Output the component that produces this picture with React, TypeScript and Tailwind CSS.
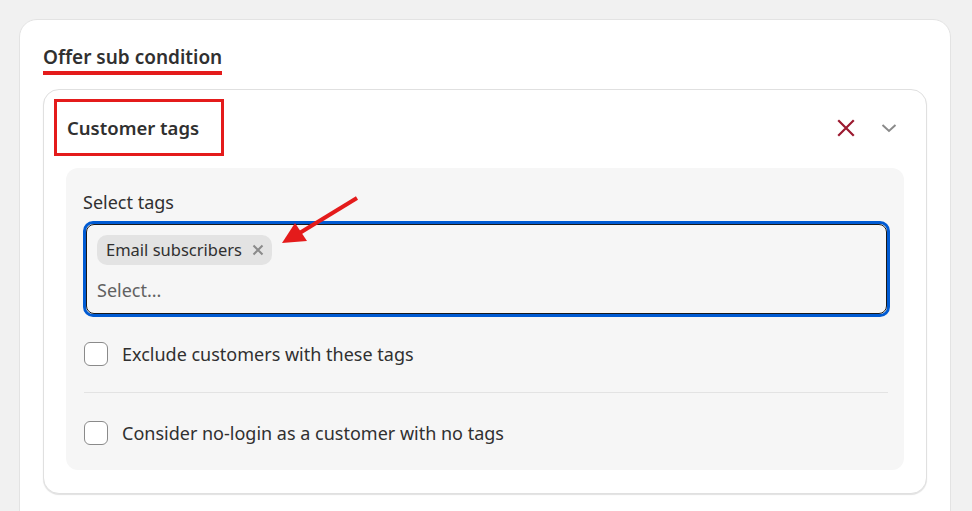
import React from "react";

export default function App() {
  return (
    <div
      className="min-h-screen bg-[#f1f1f1] pt-[19px] pl-[19px] pr-[21px] text-[#303030]"
      style={{ fontFamily: '"Segoe UI", "Noto Sans", "Open Sans", sans-serif' }}
    >
      <div className="relative rounded-t-[18px] border border-[#e3e3e3] bg-white px-[23px] pt-[26px] pb-[30px]">
        <div className="inline-block">
          <div className="text-[19px] font-semibold leading-[22px] text-[#303030]">Offer sub condition</div>
          <div className="mt-[3px] h-[4px] w-full bg-[#e41b1b]" />
        </div>

        <div className="mt-[14px] rounded-[16px] border border-[#e0e0e0] bg-white pl-[10px] pr-[22px] pt-[9px] pb-[23px] shadow-[0_1px_1px_rgba(0,0,0,0.12)]">
          <div className="flex items-center justify-between">
            <div className="flex h-[57px] w-[170px] items-center border-[3px] border-[#e41b1b] pl-[10px]">
              <span className="text-[18.5px] font-semibold text-[#303030]">Customer tags</span>
            </div>
            <div className="flex items-center gap-[26px] pr-[7px]">
              <svg width="18" height="18" viewBox="0 0 18 18">
                <path d="M2 2 L16 16 M16 2 L2 16" stroke="#9c1a30" strokeWidth="2.2" strokeLinecap="square" />
              </svg>
              <svg width="16" height="10" viewBox="0 0 16 10">
                <path d="M1.5 2 L8 8 L14.5 2" stroke="#8a8a8a" strokeWidth="2" fill="none" />
              </svg>
            </div>
          </div>

          <div className="ml-[12px] mt-[12px] rounded-[12px] bg-[#f6f6f6] pl-[17px] pr-[14px] pt-[22px]">
            <div className="text-[18px] leading-[24px] text-[#303030]">Select tags</div>
            <div className="relative mt-[7px] h-[96px] rounded-[10px] border-[3px] border-[#005bd3] p-0">
              <div className="h-full rounded-[8px] border border-[#1a1a1a] pl-[10px] pt-[10px]">
                <div className="inline-flex h-[30px] items-center gap-[10px] rounded-[10px] bg-[#e3e3e3] pl-[9px] pr-[8px]">
                  <span className="text-[16.5px] text-[#303030]">Email subscribers</span>
                  <svg width="12" height="12" viewBox="0 0 12 12">
                    <path d="M1.5 1.5 L10.5 10.5 M10.5 1.5 L1.5 10.5" stroke="#8a8a8a" strokeWidth="2" />
                  </svg>
                </div>
                <div className="mt-[15px] text-[18px] leading-[20px] text-[#616161]">Select...</div>
              </div>
            </div>

            <div className="mt-[25px] mb-[26px] flex h-[24px] items-center gap-[14px] pl-[1px]">
              <div className="h-[24px] w-[24px] rounded-[6px] border border-[#8a8a8a] bg-white" />
              <span className="text-[18px] leading-[24px] text-[#303030]">Exclude customers with these tags</span>
            </div>
            <div className="mr-[2px] ml-[1px] h-px bg-[#e3e3e3]" />
            <div className="mt-[28px] pb-[25px]">
              <div className="flex h-[24px] items-center gap-[14px] pl-[1px]">
                <div className="h-[24px] w-[24px] rounded-[6px] border border-[#8a8a8a] bg-white" />
                <span className="text-[18px] leading-[24px] text-[#303030]">Consider no-login as a customer with no tags</span>
              </div>
            </div>
          </div>
        </div>

        <svg
          className="absolute"
          width="400"
          height="260"
          viewBox="0 0 400 260"
          style={{ left: -20, top: -20 }}
        >
          <line x1="357" y1="198" x2="298" y2="234" stroke="#e41b1b" strokeWidth="4" />
          <polygon points="282,243 295,223 307,241" fill="#e41b1b" />
        </svg>
      </div>
    </div>
  );
}
